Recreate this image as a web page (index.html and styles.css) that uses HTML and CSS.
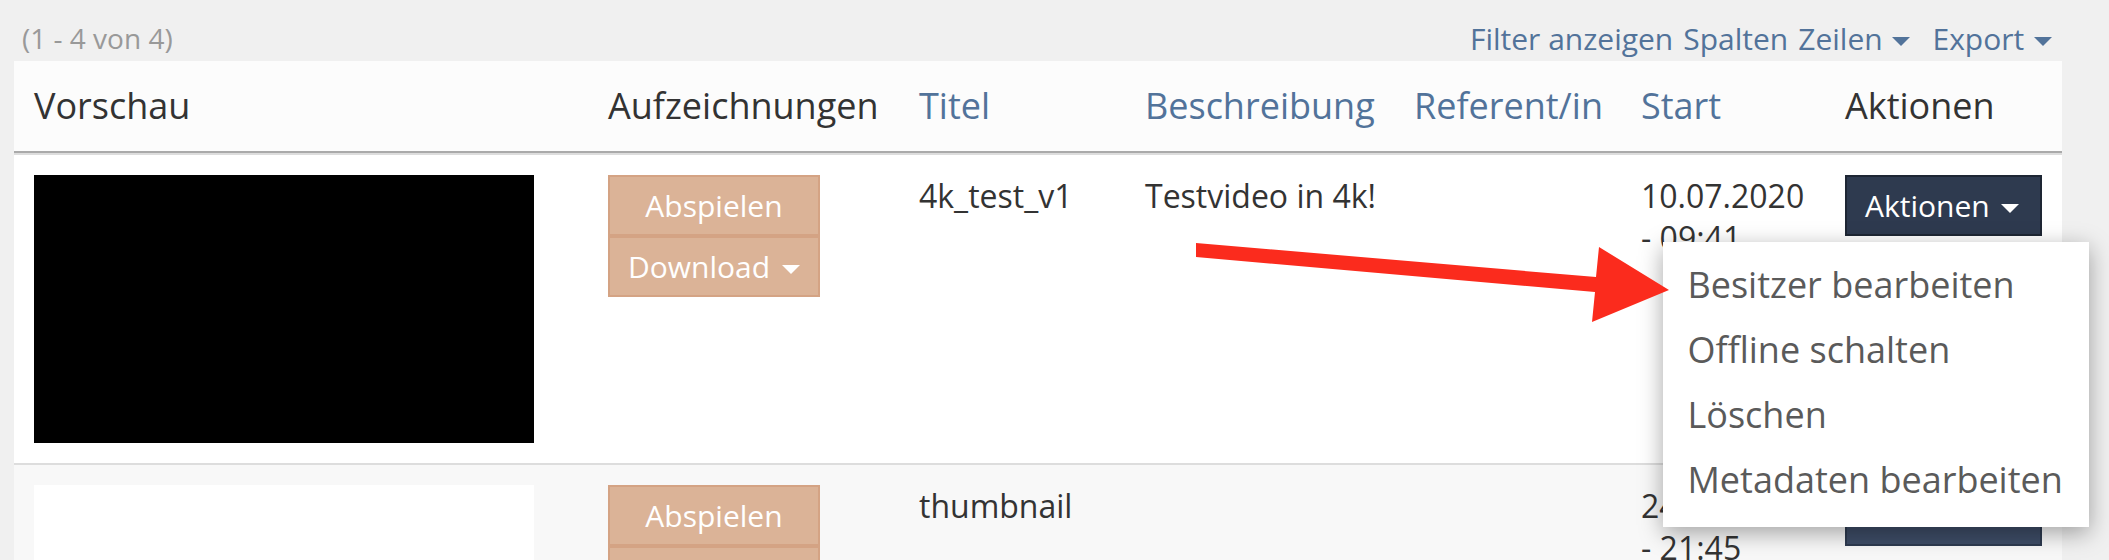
FILE: index.html
```html
<!DOCTYPE html>
<html>
  <head>
    <title>Aufzeichnungen</title>
    <link rel="stylesheet" href="styles.css">
  </head>
  <body>
    <div class="page">
      <div class="toolbar">
        <span class="count">(1 - 4 von 4)</span>
        <div class="links">
          <a href="#">Filter anzeigen</a>
          <a href="#">Spalten</a>
          <a href="#">Zeilen <span class="caret"></span></a>
          <a href="#" class="export">Export <span class="caret"></span></a>
        </div>
      </div>

      <table class="list">
        <colgroup>
          <col style="width: 574px">
          <col style="width: 311px">
          <col style="width: 226px">
          <col style="width: 269px">
          <col style="width: 227px">
          <col style="width: 204px">
          <col style="width: 237px">
        </colgroup>
        <thead>
          <tr>
            <th>Vorschau</th>
            <th>Aufzeichnungen</th>
            <th><a href="#">Titel</a></th>
            <th><a href="#">Beschreibung</a></th>
            <th><a href="#">Referent/in</a></th>
            <th><a href="#">Start</a></th>
            <th>Aktionen</th>
          </tr>
        </thead>
        <tbody>
          <tr>
            <td><div class="thumb thumb-black"></div></td>
            <td>
              <div class="btn-stack">
                <button class="btn btn-play">Abspielen</button>
                <button class="btn btn-play">Download <span class="caret"></span></button>
              </div>
            </td>
            <td>4k_test_v1</td>
            <td>Testvideo in 4k!</td>
            <td></td>
            <td>10.07.2020 - 09:41</td>
            <td>
              <div class="dropdown">
                <button class="btn btn-dark open">Aktionen <span class="caret"></span></button>
                <ul class="menu">
                  <li>Besitzer bearbeiten</li>
                  <li>Offline schalten</li>
                  <li>Löschen</li>
                  <li>Metadaten bearbeiten</li>
                </ul>
              </div>
            </td>
          </tr>
          <tr class="alt">
            <td><div class="thumb"></div></td>
            <td>
              <div class="btn-stack">
                <button class="btn btn-play">Abspielen</button>
                <button class="btn btn-play">Download <span class="caret"></span></button>
              </div>
            </td>
            <td>thumbnail</td>
            <td></td>
            <td></td>
            <td>24.06.2020 - 21:45</td>
            <td>
              <div class="dropdown">
                <button class="btn btn-dark">Aktionen <span class="caret"></span></button>
              </div>
            </td>
          </tr>
        </tbody>
      </table>
    </div>

    <!-- Markierung im Screenshot -->
    <svg class="arrow" width="2109" height="560" viewBox="0 0 2109 560">
      <polygon points="1196,243 1596,277 1599,247 1669,290 1592,322 1595,292 1196,257" fill="#fb2b1d"/>
    </svg>
  </body>
</html>
```

FILE: styles.css
```css
body {
  margin: 0;
  background: #f0f0f0;
  font-family: "Open Sans", sans-serif;
  color: #333;
  overflow: hidden;
}
.page {
  width: 2048px;
  margin-left: 14px;
}
.toolbar {
  display: flex;
  justify-content: space-between;
  align-items: center;
  height: 46px;
  padding-top: 15px;
}
.count {
  padding-left: 8px;
  font-size: 28px;
  color: #999;
}
.links {
  display: flex;
  align-items: center;
  gap: 10px;
  padding-right: 10px;
  font-size: 30px;
}
.links a {
  color: #52739a;
  text-decoration: none;
}
.links .export {
  margin-left: 12px;
}
.caret {
  display: inline-block;
  width: 0;
  height: 0;
  margin-left: 2px;
  vertical-align: middle;
  border-top: 9px solid;
  border-left: 9px solid transparent;
  border-right: 9px solid transparent;
}
.list {
  width: 2048px;
  table-layout: fixed;
  border-collapse: separate;
  border-spacing: 0;
  background: #fff;
}
.list th {
  padding: 20px 12px 20px 20px;
  font-size: 36px;
  font-weight: normal;
  line-height: 50px;
  text-align: left;
  background: #fcfcfc;
  border-bottom: 2px solid #aaa;
}
.list th a {
  color: #52739a;
  text-decoration: none;
}
.list td {
  padding: 20px 12px 20px 20px;
  vertical-align: top;
  font-size: 32px;
  line-height: 42px;
  border-top: 2px solid #ddd;
}
.list tr.alt td {
  background: #f8f8f8;
}
.thumb {
  width: 500px;
  height: 268px;
  background: #fff;
}
.thumb-black {
  background: #000;
}
.btn-stack {
  display: inline-flex;
  flex-direction: column;
}
.btn {
  font-family: inherit;
  font-size: 30px;
  line-height: 43px;
  padding: 7px 18px;
  border: 2px solid;
  border-radius: 0;
  color: #fff;
  cursor: pointer;
}
.btn .caret {
  margin-left: 4px;
  border-width: 9px 9px 0;
}
.btn-play {
  background: #dbb397;
  border-color: #d4a384;
}
.btn-dark {
  padding: 7px 21px 7px 18px;
  background: #3d4c66;
  border-color: #2d3a4f;
}
.btn-dark.open {
  background: #2e3a4f;
  border-color: #1e2634;
}
.dropdown {
  position: relative;
  display: inline-block;
}
.menu {
  position: absolute;
  top: 100%;
  right: -47px;
  z-index: 5;
  width: 426px;
  margin: 6px 0 0;
  padding: 11px 0 14px;
  list-style: none;
  background: #fff;
  box-shadow: 0 6px 22px rgba(0, 0, 0, 0.35);
  font-size: 36px;
  line-height: 50px;
  color: #5a5a5a;
  box-sizing: border-box;
}
.menu li {
  padding: 7px 20px 8px 24px;
  white-space: nowrap;
}
.arrow {
  position: absolute;
  top: 0;
  left: 0;
  z-index: 10;
  pointer-events: none;
}
```
